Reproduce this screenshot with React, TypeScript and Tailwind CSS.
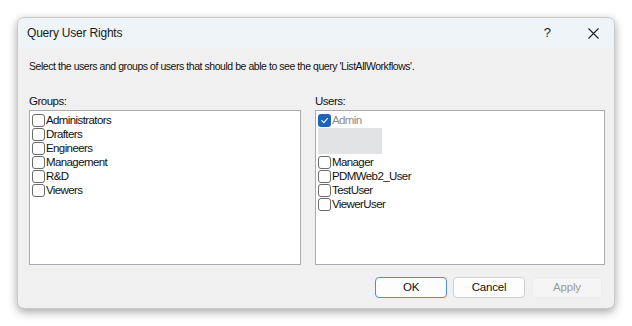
import React from "react";

const font = { fontFamily: '"Liberation Sans", Arial, sans-serif' };

function Box({ checked }: { checked?: boolean }) {
  if (checked) {
    return (
      <span className="flex h-[13px] w-[13px] shrink-0 items-center justify-center rounded-[3px] bg-[#1f63b8]">
        <svg width="9" height="9" viewBox="0 0 10 10">
          <path d="M2 5.2 L4.2 7.3 L8.2 2.8" fill="none" stroke="white" strokeWidth="1.3" strokeLinecap="round" strokeLinejoin="round" />
        </svg>
      </span>
    );
  }
  return <span className="h-[13px] w-[13px] shrink-0 rounded-[3px] border border-[#6b6b6b] bg-white" />;
}

function Row({ label, checked, disabled }: { label: string; checked?: boolean; disabled?: boolean }) {
  return (
    <div className="flex h-[14px] items-center gap-[1px]">
      <Box checked={checked} />
      <span className={`text-[11.5px] leading-[14px] tracking-[-0.6px] ${disabled ? "text-[#8c8c8c]" : "text-[#111]"}`}>{label}</span>
    </div>
  );
}

export default function App() {
  return (
    <div className="h-[326px] w-[632px] bg-white pl-[17px] pt-[17px]" style={font}>
      <div className="flex h-[292px] w-[598px] flex-col overflow-hidden rounded-[7px] border border-[#c9c9c9] bg-[#f0f0f0] shadow-[0_3px_10px_rgba(0,0,0,0.35)]">
        <div className="flex h-[30px] shrink-0 items-center bg-[#eef4f7] pl-[9px]">
          <span className="text-[12px] tracking-[-0.2px] text-[#1a1a1a]">Query User Rights</span>
          <span className="ml-auto mr-[37px] text-[13px] text-[#222]">?</span>
          <svg className="mr-[15px]" width="11" height="11" viewBox="0 0 11 11">
            <path d="M0.5 0.5 L10.5 10.5 M10.5 0.5 L0.5 10.5" stroke="#222" strokeWidth="1.1" />
          </svg>
        </div>
        <div className="flex flex-1 flex-col pl-[11px] pr-[9px] pt-[11px]">
          <div className="text-[10.5px] leading-[14px] tracking-[-0.45px] text-[#111]">
            Select the users and groups of users that should be able to see the query 'ListAllWorkflows'.
          </div>
          <div className="mt-[21px] flex gap-[14px]">
            <div className="flex w-[272px] flex-col">
              <div className="h-[16px] text-[11.5px] leading-[14px] tracking-[-0.5px] text-[#111]">Groups:</div>
              <div className="h-[155px] border border-[#a9abb0] bg-white px-[2px] pt-[2px]">
                <Row label="Administrators" />
                <Row label="Drafters" />
                <Row label="Engineers" />
                <Row label="Management" />
                <Row label="R&D" />
                <Row label="Viewers" />
              </div>
            </div>
            <div className="flex w-[290px] flex-col">
              <div className="h-[16px] text-[11.5px] leading-[14px] tracking-[-0.5px] text-[#111]">Users:</div>
              <div className="h-[155px] border border-[#a9abb0] bg-white px-[2px] pt-[2px]">
                <Row label="Admin" checked disabled />
                <div className="h-[28px] py-[1px]">
                  <div className="h-full w-[64px] bg-[#e1e3e5]" />
                </div>
                <Row label="Manager" />
                <Row label="PDMWeb2_User" />
                <Row label="TestUser" />
                <Row label="ViewerUser" />
              </div>
            </div>
          </div>
          <div className="mt-[12px] flex justify-end gap-[6px] pr-[3px]">
            <button className="h-[21px] w-[72px] rounded-[4px] border-[1.5px] border-[#4a90d9] bg-[#fdfdfd] text-[11.5px] tracking-[-0.2px] text-[#111]">OK</button>
            <button className="h-[21px] w-[72px] rounded-[4px] border border-[#d0d0d0] bg-[#fdfdfd] text-[11.5px] tracking-[-0.2px] text-[#111]">Cancel</button>
            <button className="ml-[1px] h-[21px] w-[70px] rounded-[4px] border border-[#ececec] bg-[#f5f5f5] text-[11.5px] tracking-[-0.2px] text-[#9a9a9a]">Apply</button>
          </div>
        </div>
      </div>
    </div>
  );
}
